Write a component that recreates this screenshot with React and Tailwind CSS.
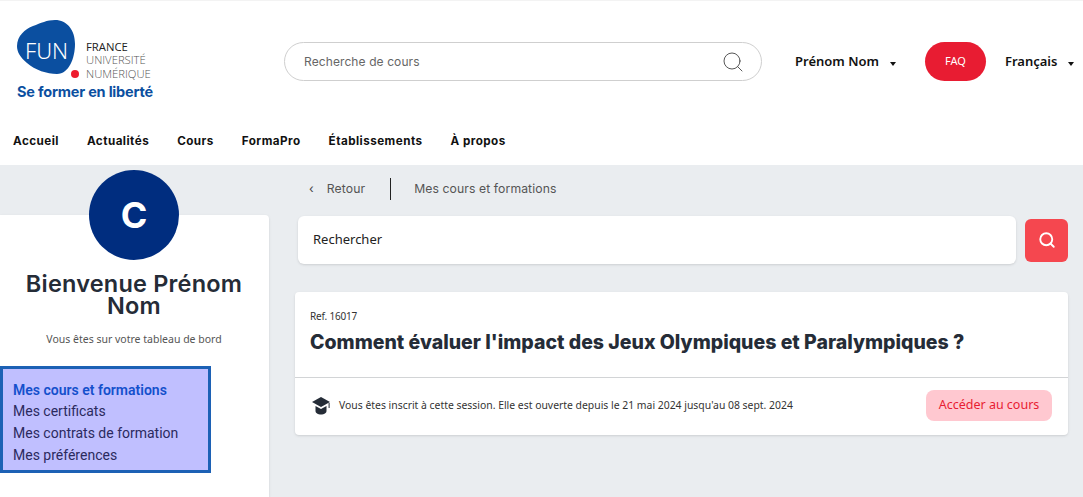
import { Search } from "lucide-react";

const navLinks = ["Accueil", "Actualités", "Cours", "FormaPro", "Établissements", "À propos"];
const menuLinks = ["Mes certificats", "Mes contrats de formation", "Mes préférences"];

function Logo() {
  return (
    <div className="flex flex-col shrink-0 self-start mt-[19px] w-[140px] font-['Open_Sans',sans-serif]">
      <div className="flex items-end h-[60px]">
        <div className="relative w-[69px] h-[60px] shrink-0">
          <svg width="69" height="60" viewBox="0 0 69 60" className="block">
            <path d="M38 0 C50 0 58 10 58 24 C58 38 52 54 40 54 C30 54 18 50 10 43 C3 37 0 32 0 26 C0 16 8 9 16 6 C24 3 30 0 38 0 Z" fill="#0b4fa0" />
            <circle cx="58" cy="54" r="4" fill="#ee1c2e" />
          </svg>
          <span className="absolute left-[8px] top-[17px] text-[22px] leading-[26px] font-light text-white font-['Noto_Sans',sans-serif]">FUN</span>
        </div>
        <div className="flex flex-col text-[11.3px] leading-[13.5px] whitespace-nowrap">
          <span className="text-[#222]">FRANCE</span>
          <span className="text-[#555] font-light">UNIVERSITÉ</span>
          <span className="text-[#555] font-light">NUMÉRIQUE</span>
        </div>
      </div>
      <div className="text-[14.5px] leading-[18px] mt-[3px] font-bold text-[#0b4fa0] font-['Inter',sans-serif] tracking-[-0.2px] whitespace-nowrap">Se former en liberté</div>
    </div>
  );
}

function Caret() {
  return <span className="inline-block ml-[11px] mt-[5px] w-0 h-0 border-x-[3.5px] border-x-transparent border-t-[4px] border-t-[#111]" />;
}

function Header() {
  return (
    <header className="bg-white h-[165px] border-t border-[#f3f3f3]">
      <div className="flex items-center h-[121px] pl-[17px]">
        <Logo />
        <div className="flex items-center justify-between shrink-0 ml-[127px] w-[478px] h-[39px] rounded-full border border-[#cfcfcf] pl-[19px] pr-[16px]">
          <span className="text-[12px] tracking-[0.1px] text-[#666] font-['Inter',sans-serif]">Recherche de cours</span>
          <Search size={24} strokeWidth={0.9} className="text-[#444]" />
        </div>
        <div className="flex items-center shrink-0 whitespace-nowrap ml-[33px] text-[13px] font-semibold text-[#111] font-['Noto_Sans',sans-serif]">
          Prénom Nom<Caret />
        </div>
        <div className="flex items-center justify-center shrink-0 ml-[29px] w-[61px] h-[39px] rounded-full bg-[#e81c32] text-white text-[11px] font-['Noto_Sans',sans-serif]">FAQ</div>
        <div className="flex items-center shrink-0 ml-[19px] text-[13px] font-semibold text-[#111] font-['Noto_Sans',sans-serif]">
          Français<Caret />
        </div>
      </div>
      <nav className="flex gap-[28px] mt-[11px] pl-[13px] text-[11.7px] tracking-[0.45px] leading-[16px] font-bold text-[#111] font-['Inter',sans-serif]">
        {navLinks.map((l) => <a key={l} href="/">{l}</a>)}
      </nav>
    </header>
  );
}

function Sidebar() {
  return (
    <aside className="w-[269px] shrink-0 mt-[50px] bg-white rounded-tr shadow-sm font-['Noto_Sans',sans-serif]">
      <div className="flex flex-col items-center text-center pr-px">
        <div className="flex items-center justify-center -mt-[45px] w-[90px] h-[90px] rounded-full bg-[#002d7f] text-white text-[36px] font-bold font-['Inter',sans-serif]">C</div>
        <h2 className="mt-[13px] px-[20px] text-[23.5px] leading-[22px] tracking-[0.2px] font-semibold text-[#252c37] font-['Inter',sans-serif]">Bienvenue Prénom Nom</h2>
        <p className="mt-[15px] text-[10.5px] text-[#555]">Vous êtes sur votre tableau de bord</p>
      </div>
      <div className="mt-[18px] w-[211px] h-[107px] border-[3px] border-[#1c61b5] bg-[#c0bfff] pt-[11px] pl-[10px] text-[14px] leading-[21.7px] text-[#2b2a5e] font-['Roboto',sans-serif]">
        <div className="font-semibold text-[#1450cc]">Mes cours et formations</div>
        {menuLinks.map((l) => <div key={l}>{l}</div>)}
      </div>
    </aside>
  );
}

function CapIcon() {
  return (
    <svg width="18" height="18" viewBox="0 0 18 18" className="shrink-0">
      <path d="M9 0 L18 5 L9 10 L0 5 Z" fill="#252c37" />
      <path d="M3.5 9 L9 12 L14.5 9 V14 C14.5 16 12 17.5 9 17.5 C6 17.5 3.5 16 3.5 14 Z" fill="#252c37" />
      <rect x="16.6" y="6" width="1" height="5" fill="#252c37" />
    </svg>
  );
}

function CourseCard() {
  return (
    <div className="mt-[28px] w-[773px] ml-[26px] bg-white rounded shadow-sm font-['Noto_Sans',sans-serif]">
      <div className="h-[86px] border-b border-[#d2d4d6] pt-[15px] px-[15px]">
        <div className="text-[10px] tracking-[-0.2px] leading-[18px] text-[#333]">Ref. 16017</div>
        <h3 className="mt-[4px] text-[19.5px] leading-[26px] font-extrabold text-[#252c37] font-['Inter',sans-serif] whitespace-nowrap">Comment évaluer l'impact des Jeux Olympiques et Paralympiques ?</h3>
      </div>
      <div className="flex items-center justify-between h-[57px] pb-[2px] pl-[17px] pr-[16px]">
        <div className="flex items-center gap-[9px] text-[10.4px] text-[#333]">
          <CapIcon />
          Vous êtes inscrit à cette session. Elle est ouverte depuis le 21 mai 2024 jusqu'au 08 sept. 2024
        </div>
        <div className="flex items-center justify-center w-[126px] h-[31px] rounded-lg bg-[#ffc8d0] text-[12.5px] text-[#e81c32]">Accéder au cours</div>
      </div>
    </div>
  );
}

function Main() {
  return (
    <main className="flex-1 min-w-0">
      <div className="flex items-center h-[22px] mt-[13px] ml-[40px] text-[12.2px] tracking-[0.1px] text-[#555] font-['Inter',sans-serif]">
        <span className="text-[#444] mr-[13px]">‹</span>
        <span>Retour</span>
        <span className="w-px h-[22px] bg-[#222] ml-[25px] mr-[23px]" />
        <span>Mes cours et formations</span>
      </div>
      <div className="flex items-center mt-[16px] ml-[29px]">
        <div className="flex items-center w-[718px] h-[48px] rounded-md bg-white px-[15px] text-[13px] text-[#222] font-['Noto_Sans',sans-serif] shadow-sm">Rechercher</div>
        <div className="flex items-center justify-center ml-[9px] w-[43px] h-[43px] rounded-md bg-[#f5474f]">
          <Search size={18} strokeWidth={2.5} className="text-white" />
        </div>
      </div>
      <CourseCard />
    </main>
  );
}

export default function App() {
  return (
    <div className="h-[497px] w-[1083px] overflow-hidden bg-[#eaedf0]">
      <Header />
      <div className="flex h-[332px]">
        <Sidebar />
        <Main />
      </div>
    </div>
  );
}
